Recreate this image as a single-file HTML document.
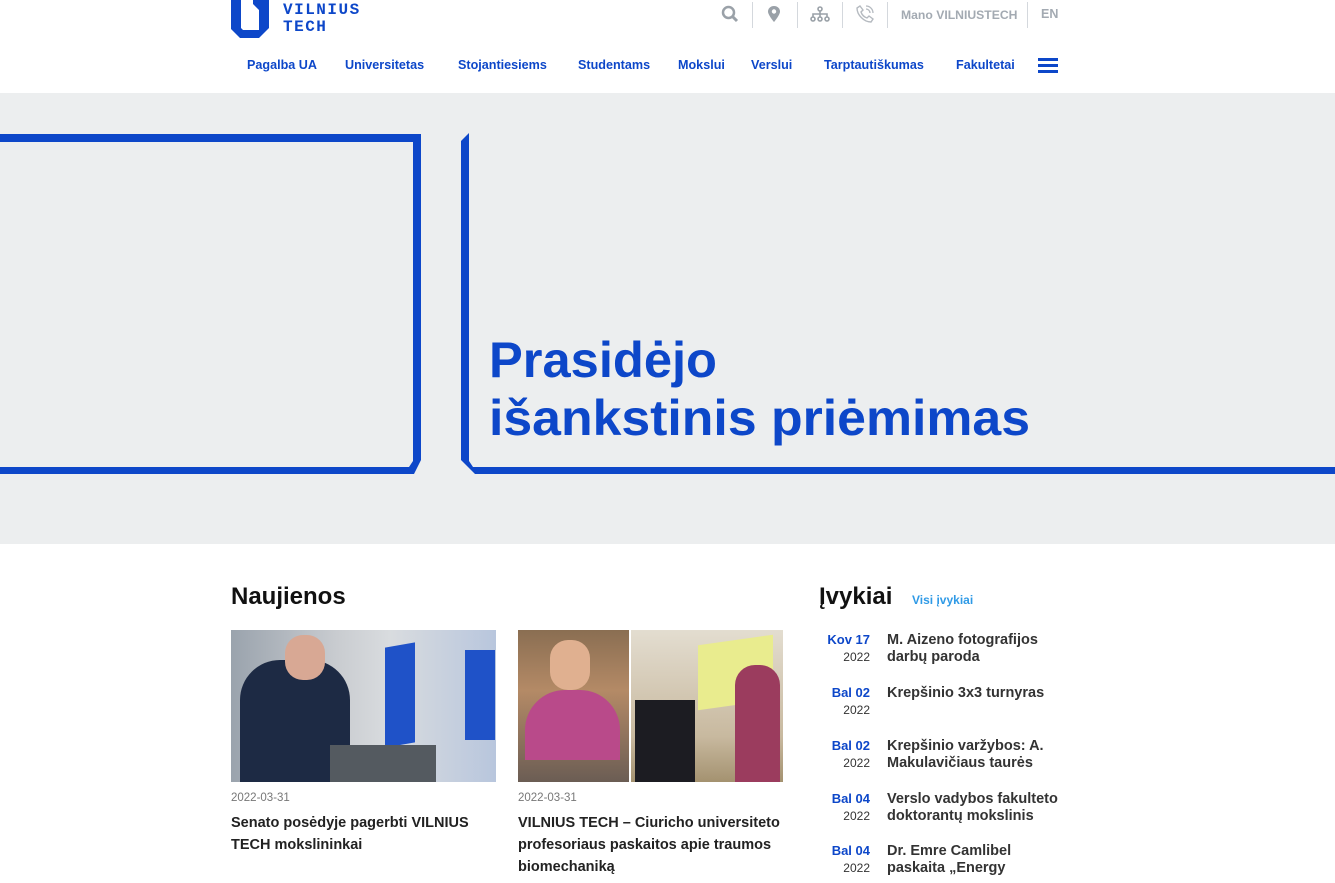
<!DOCTYPE html>
<html><head><meta charset="utf-8"><style>
*{margin:0;padding:0;box-sizing:border-box}
body{width:1335px;height:883px;overflow:hidden;background:#fff;font-family:"Liberation Sans",sans-serif;position:relative}
.a{position:absolute}
.nav a{position:absolute;top:58px;font-size:12.6px;font-weight:bold;color:#0d47c9;text-decoration:none;white-space:nowrap}
.sep{position:absolute;top:2px;width:1px;height:26px;background:#d4d8dd}
.ico{position:absolute;top:5px}
.evi{position:absolute;left:820px;width:260px}
.evi .m{position:absolute;left:0;width:50px;text-align:right;font-size:13px;font-weight:bold;color:#0d47c9}
.evi .y{position:absolute;left:0;width:50px;text-align:right;font-size:12px;color:#333;top:18px}
.evi .t{position:absolute;left:67px;font-size:14.5px;font-weight:bold;color:#333;line-height:17px;width:182px}
.nt{font-size:14.5px;font-weight:bold;color:#222;line-height:22px}
.nd{font-size:11.5px;color:#777}
</style></head><body>
<!-- logo -->
<svg class="a" style="left:231px;top:0" width="40" height="38" viewBox="0 0 40 38"><path d="M0 0 H10 V28 L12 30 H28 V10 L22 4 V0 H38 V28 L28 38 H9 L0 29 Z" fill="#0d47c9"/></svg>
<div class="a" style="left:283px;top:2px;font-family:'Liberation Mono',monospace;font-weight:bold;font-size:16px;line-height:17px;color:#0d47c9;letter-spacing:1.5px">VILNIUS<br>TECH</div>
<!-- top utility -->
<svg class="ico" style="left:721px" width="18" height="18" viewBox="0 0 18 18"><circle cx="7.5" cy="7.5" r="5.5" stroke="#9aa1a8" stroke-width="2.5" fill="none"/><path d="M11.5 11.5 L16 16" stroke="#9aa1a8" stroke-width="3"/></svg>
<div class="sep" style="left:752px"></div>
<svg class="ico" style="left:767px" width="14" height="18" viewBox="0 0 14 18"><path d="M7 1 C3 1 1 4 1 6.5 C1 10 7 17 7 17 C7 17 13 10 13 6.5 C13 4 11 1 7 1Z" fill="#9aa1a8"/><circle cx="7" cy="6.5" r="2.2" fill="#fff"/></svg>
<div class="sep" style="left:797px"></div>
<svg class="ico" style="left:810px" width="20" height="18" viewBox="0 0 20 18"><g fill="none" stroke="#9aa1a8" stroke-width="1.6"><circle cx="10" cy="4" r="2"/><circle cx="3" cy="14" r="2"/><circle cx="10" cy="14" r="2"/><circle cx="17" cy="14" r="2"/><path d="M10 6V12M3 12V9H17V12"/></g></svg>
<div class="sep" style="left:842px"></div>
<svg class="ico" style="left:856px" width="18" height="18" viewBox="0 0 18 18"><path d="M4 1 L7 5 L5 7 C6 10 8 12 11 13 L13 11 L17 14 L15 17 C8 17 1 10 1 3 Z" fill="none" stroke="#b5bac0" stroke-width="1.4"/><path d="M10 4 A4 4 0 0 1 14 8 M10 1 A7 7 0 0 1 17 8" fill="none" stroke="#b5bac0" stroke-width="1.3"/></svg>
<div class="sep" style="left:887px"></div>
<div class="a" style="left:901px;top:8px;font-size:12.2px;font-weight:bold;color:#a3aab2">Mano VILNIUSTECH</div>
<div class="sep" style="left:1027px"></div>
<div class="a" style="left:1041px;top:7px;font-size:12.5px;font-weight:bold;color:#a3aab2">EN</div>
<!-- nav -->
<div class="nav">
<a style="left:247px">Pagalba UA</a><a style="left:345px">Universitetas</a><a style="left:458px">Stojantiesiems</a><a style="left:578px">Studentams</a><a style="left:678px">Mokslui</a><a style="left:751px">Verslui</a><a style="left:824px">Tarptautiškumas</a><a style="left:956px">Fakultetai</a>
</div>
<div class="a" style="left:1038px;top:58px;width:20px;height:2.5px;background:#0d47c9;box-shadow:0 6px 0 #0d47c9,0 12px 0 #0d47c9"></div>
<!-- hero -->
<div class="a" style="left:0;top:93px;width:1335px;height:451px;background:#eceeef"></div>
<svg class="a" style="left:0;top:93px" width="1335" height="451" viewBox="0 0 1335 451">
<path d="M0 41 H421 V367 L414 381 H0 V374 H409 L413 368 V49 H0 Z" fill="#0d47c9"/>
<path d="M461 48 L469 40 V368 L473 374 H1335 V381 H475 L461 367 Z" fill="#0d47c9"/>
<text x="489" y="284" font-family="Liberation Sans,sans-serif" font-size="50" fill="#0d47c9" font-weight="bold" textLength="228" lengthAdjust="spacingAndGlyphs">Prasidėjo</text>
<text x="489" y="342" font-family="Liberation Sans,sans-serif" font-size="50" fill="#0d47c9" font-weight="bold" textLength="541" lengthAdjust="spacingAndGlyphs">išankstinis priėmimas</text>
</svg>
<!-- news -->
<div class="a" style="left:231px;top:583px;font-size:24px;font-weight:bold;color:#111">Naujienos</div>
<div class="a" style="left:231px;top:630px;width:265px;height:152px;background:linear-gradient(90deg,#9aa3ad 0%,#c9ccd0 40%,#d9dcdf 60%,#b8c6dd 100%)"></div>
<div class="a" style="left:385px;top:645px;width:30px;height:100px;background:#1f52c8;transform:skewY(-10deg)"></div>
<div class="a" style="left:465px;top:650px;width:30px;height:90px;background:#1f52c8"></div>
<div class="a" style="left:240px;top:660px;width:110px;height:122px;background:#1d2a44;border-radius:40px 40px 0 0"></div>
<div class="a" style="left:285px;top:635px;width:40px;height:45px;background:#d8a894;border-radius:18px"></div>
<div class="a" style="left:330px;top:745px;width:106px;height:37px;background:#545a60"></div>
<div class="a" style="left:518px;top:630px;width:111px;height:152px;background:linear-gradient(180deg,#8a6e52,#b48a66 40%,#6b5d54)"></div>
<div class="a" style="left:525px;top:690px;width:95px;height:70px;background:#b94a8a;border-radius:40px 40px 0 0"></div>
<div class="a" style="left:550px;top:640px;width:40px;height:50px;background:#e0b090;border-radius:18px"></div>
<div class="a" style="left:631px;top:630px;width:152px;height:152px;background:linear-gradient(180deg,#e3ddd0,#c8b99f 70%,#a49270)"></div>
<div class="a" style="left:698px;top:640px;width:75px;height:65px;background:#e9ec8e;transform:skewY(-8deg)"></div>
<div class="a" style="left:735px;top:665px;width:45px;height:117px;background:#9b3c5e;border-radius:20px 20px 0 0"></div>
<div class="a" style="left:635px;top:700px;width:60px;height:82px;background:#1c1c22"></div>
<div class="a nd" style="left:231px;top:792px">2022-03-31</div>
<div class="a nt" style="left:231px;top:812px;width:265px">Senato posėdyje pagerbti VILNIUS TECH mokslininkai</div>
<div class="a nd" style="left:518px;top:792px">2022-03-31</div>
<div class="a nt" style="left:518px;top:812px;width:270px">VILNIUS TECH – Ciuricho universiteto profesoriaus paskaitos apie traumos biomechaniką</div>
<!-- events -->
<div class="a" style="left:819px;top:583px;font-size:24px;font-weight:bold;color:#111">Įvykiai</div>
<div class="a" style="left:912px;top:593px;font-size:12px;font-weight:bold;color:#2f9ae6">Visi įvykiai</div>
<div class="evi" style="top:632px"><div class="m">Kov 17</div><div class="y">2022</div><div class="t">M. Aizeno fotografijos darbų paroda</div></div>
<div class="evi" style="top:685px"><div class="m">Bal 02</div><div class="y">2022</div><div class="t">Krepšinio 3x3 turnyras</div></div>
<div class="evi" style="top:738px"><div class="m">Bal 02</div><div class="y">2022</div><div class="t">Krepšinio varžybos: A. Makulavičiaus taurės</div></div>
<div class="evi" style="top:791px"><div class="m">Bal 04</div><div class="y">2022</div><div class="t">Verslo vadybos fakulteto doktorantų mokslinis</div></div>
<div class="evi" style="top:843px"><div class="m">Bal 04</div><div class="y">2022</div><div class="t">Dr. Emre Camlibel paskaita „Energy</div></div>
</body></html>
